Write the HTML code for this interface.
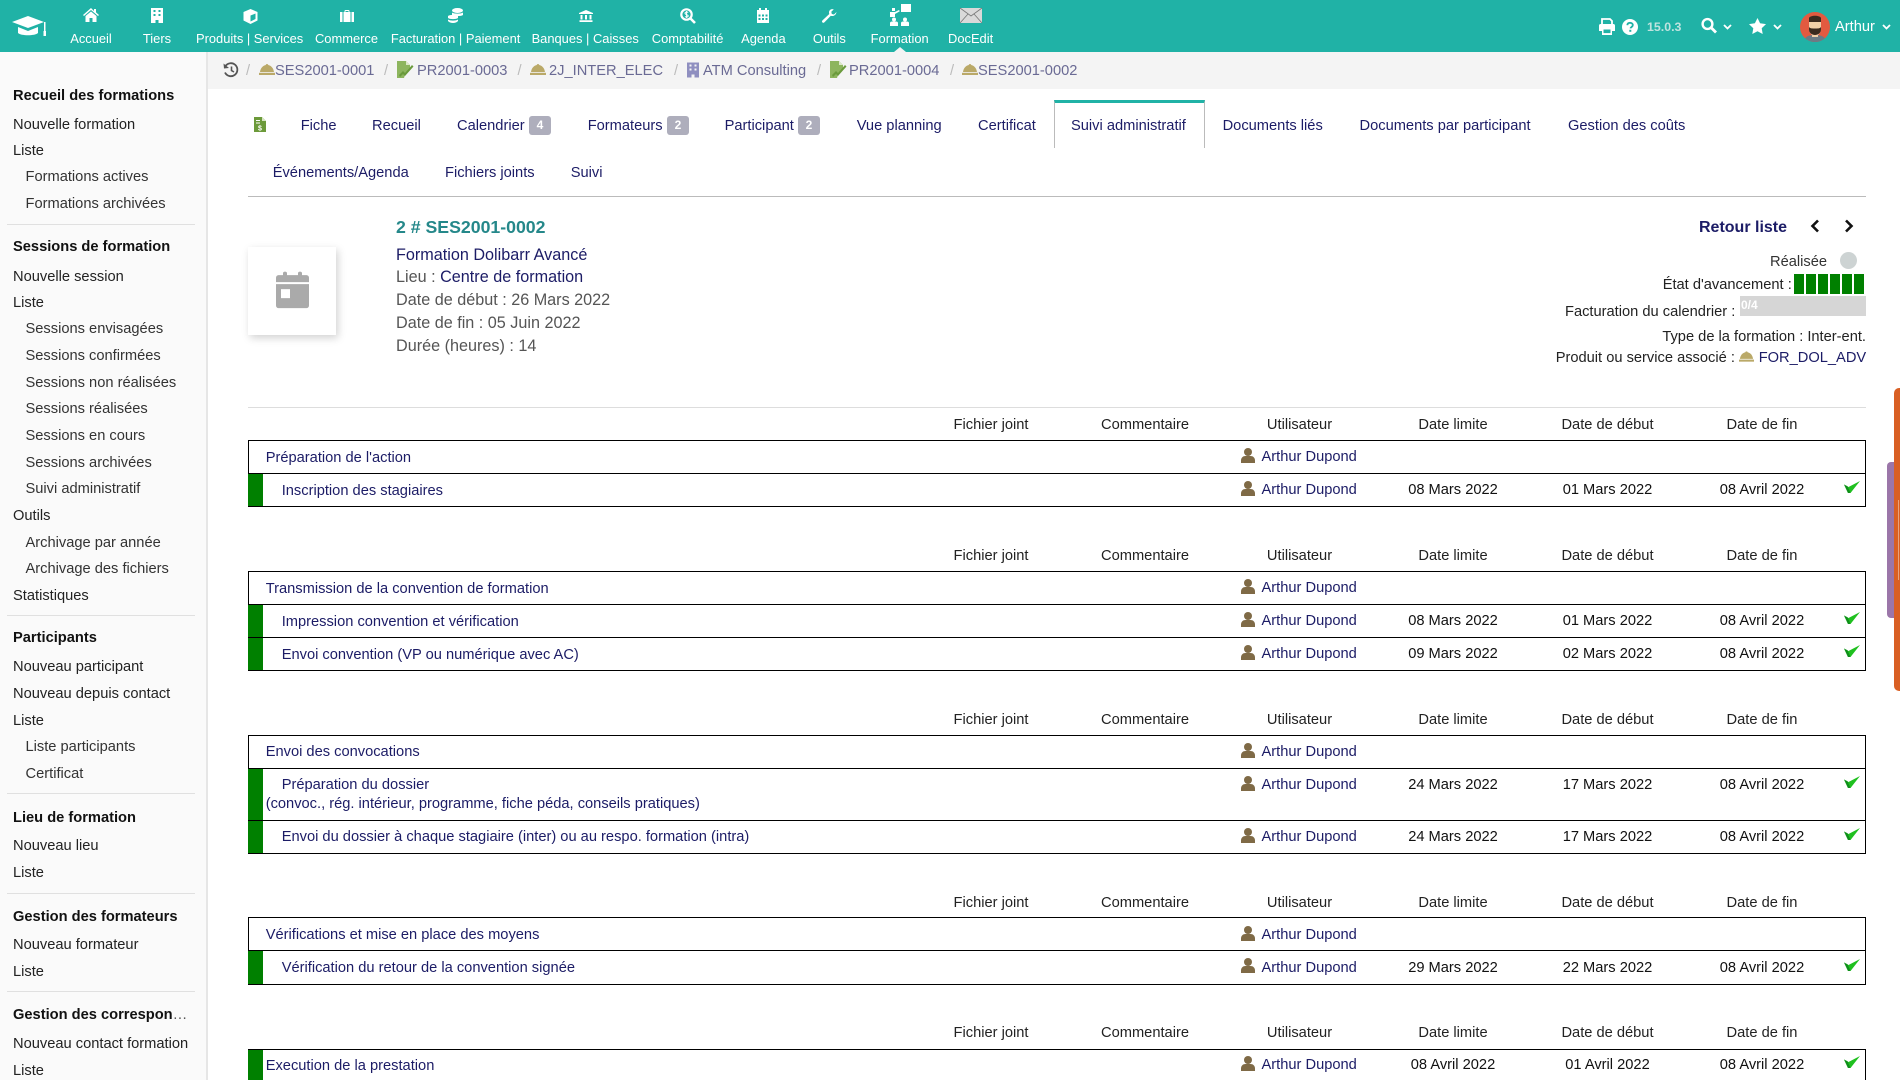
<!DOCTYPE html>
<html lang="fr"><head><meta charset="utf-8"><title>Suivi administratif</title>
<style>
*{box-sizing:border-box}
html,body{margin:0;padding:0;width:1900px;height:1080px;overflow:hidden;background:#fff;font-family:"Liberation Sans",Arial,sans-serif;font-size:14.67px;color:#222}
body{position:relative}
.t{position:absolute;line-height:20px;white-space:nowrap;margin-top:1px}
.c{transform:translateX(-50%)}
.s{left:13px;color:#222}
.i{left:25.5px;color:#333}
.h{left:13px;font-weight:700;color:#111}
.hr{position:absolute;left:7px;width:188px;height:1px;background:#e0e0e0}
.nav{color:#fff;font-size:12.9px;top:28.5px;margin-top:0}
.bc{color:#6a6a94;top:60px}
.sl{color:#bbb;top:60px}
.tab{color:#1c1c66;top:115px}
.tab2{color:#1c1c66;top:162px}
.bd{position:absolute;top:116px;width:22px;height:19px;background:#aeaebc;border-radius:3px;color:#fff;font-weight:700;font-size:12px;line-height:19px;text-align:center}
.box{position:absolute;left:248px;width:1618px;border:1px solid #000}
.ln{position:absolute;left:248px;width:1618px;height:1px;background:#000}
.g{position:absolute;left:248px;width:15px;background:#008000}
.l{color:#1c1c66}
.u{color:#1c1c66;left:1261.5px}
.d{color:#111}
svg{position:absolute;overflow:visible}
</style></head><body>
<svg width="0" height="0" style="position:absolute"><defs>
<symbol id="user" viewBox="0 0 14 15"><circle cx="7" cy="4" r="4" fill="#7f6a46"/><path d="M0 15v-2.500c0-2.800 2-4.500 4.500-4.500h5c2.500 0 4.500 1.700 4.500 4.500V15z" fill="#7f6a46"/></symbol>
<symbol id="chk" viewBox="0 0 16 12"><path d="M0 3.500L4.500 6 16 0 6.500 12H4z" fill="#1fc01f"/><path d="M0 3.500L4 12h2.500L3.500 5.300z" fill="#0f8f1a"/></symbol>
<symbol id="bell" viewBox="0 0 16 11"><path d="M8 0c.8 0 1.200.5 1.200 1C12.500 1.700 14.500 4.500 15 8H1c.5-3.500 2.500-6.300 5.800-7C6.800.5 7.200 0 8 0z" fill="#baa968"/><rect y="8.800" width="16" height="2.200" fill="#baa968"/></symbol>
<symbol id="proj" viewBox="0 0 18 18"><path d="M1 0h9l4 4v4l-5 6-1 3H1z" fill="#8db55e"/><path d="M3 14l4-4 2 2 7-8 1.500 1.500L9 15l-2-2-3 3z" fill="#6a9a3c"/><path d="M10 0v4h4z" fill="#dbe8c8"/></symbol>
</defs></svg>

<!-- top bar -->
<div style="position:absolute;left:0;top:0;width:1900px;height:52px;background:#20b2a6"></div>
<svg style="left:12px;top:15px" width="35" height="22" viewBox="0 0 35 22"><path d="M0 7L16 1l16 6-16 6z" fill="#fff"/><path d="M6 12v6c3 3 17 3 20 0v-6l-10 4z" fill="#fff"/><rect x="32" y="7" width="1.500" height="9" fill="#fff"/><rect x="31.500" y="16" width="2.500" height="5" fill="#fff"/></svg>

<svg style="left:83px;top:8px" width="16" height="14" viewBox="0 0 16 14"><path d="M8 0L0 7l1 1 7-6 7 6 1-1-3-2.600V1h-2v2z" fill="#fff"/><path d="M2.500 8L8 3.500 13.500 8v6H9.500v-4h-3v4H2.500z" fill="#fff"/></svg>
<svg style="left:151px;top:8px" width="12" height="15" viewBox="0 0 12 15"><path d="M0 0h12v15H7.500v-3h-3v3H0z" fill="#fff"/><path d="M2.500 2h2v2h-2zM7.500 2h2v2h-2zM2.500 6h2v2h-2zM7.500 6h2v2h-2z" fill="#20b2a6"/></svg>
<svg style="left:242.500px;top:9px" width="15" height="15" viewBox="0 0 15 15"><path d="M7.500 0l7 3v8.500l-7 3.500-7-3.500V3z" fill="#fff"/><path d="M7.500 6.500v6l5-2.500V4.500zM4 3l5 2.200" fill="#20b2a6"/></svg>
<svg style="left:340px;top:10px" width="14" height="12" viewBox="0 0 14 12"><path d="M4.500 2V1c0-.5.500-1 1-1h3c.5 0 1 .5 1 1v1H14v10H0V2z" fill="#fff"/><path d="M5.500 1h3v1h-3zM2.500 2h1v10h-1zM10.500 2h1v10h-1z" fill="#20b2a6"/></svg>
<svg style="left:448px;top:8px" width="15" height="15" viewBox="0 0 15 15"><ellipse cx="9.500" cy="2.500" rx="5.500" ry="2.500" fill="#fff"/><path d="M4 4.500c2 1.500 9 1.500 11 0V7c-2 1.500-9 1.500-11 0z" fill="#fff"/><path d="M0 8c2-1.500 8-1.500 10 0v2c-2 1.500-8 1.500-10 0zM0 11.500c2 1.500 8 1.500 10 0V13c-2 2.600-8 2.600-10 0z" fill="#fff"/></svg>
<svg style="left:579px;top:10px" width="14" height="12" viewBox="0 0 14 12"><path d="M7 0l7 3v1H0V3zM1.500 5h2v4.500h-2zM6 5h2v4.500H6zM10.500 5h2v4.500h-2zM.5 10.200h13V12H.5z" fill="#fff"/></svg>
<svg style="left:680px;top:8px" width="16" height="15" viewBox="0 0 16 15"><circle cx="6.500" cy="6.500" r="5.200" fill="none" stroke="#fff" stroke-width="2.200"/><path d="M10.500 10.500L15 15" stroke="#fff" stroke-width="2.600"/><path d="M8.200 4.500C7 3.600 5 4 5 5.300c0 1.600 3.200 1 3.200 2.600 0 1.200-2 1.500-3.200.6M6.600 3v7" fill="none" stroke="#fff" stroke-width="1"/></svg>
<svg style="left:757px;top:8px" width="12" height="15" viewBox="0 0 12 15"><path d="M0 2h2V0h2v2h4V0h2v2h2v13H0z" fill="#fff"/><path d="M1.500 6.500h2v2h-2zM5 6.500h2v2H5zM8.500 6.500h2v2h-2zM1.500 10h2v2h-2zM5 10h2v2H5zM8.500 10h2v2h-2z" fill="#20b2a6"/></svg>
<svg style="left:822px;top:9px" width="15" height="14" viewBox="0 0 15 14"><path d="M14.500 3L12 5.500 9.800 5 9.300 2.800 11.800.4C9.500-.5 7 1 7 3.500c0 .6.100 1 .3 1.500L.6 11.300c-.8.800-.8 1.500-.2 2.100s1.400.6 2.100-.1L8.800 6.800c2.700.9 5.200-.7 5.700-3.800z" fill="#fff"/></svg>
<svg style="left:889px;top:4px" width="22" height="22" viewBox="0 0 22 22"><rect x="12" y="0" width="10" height="8" fill="#fff"/><path d="M3 4h3v3H3zM1 8h5l4-2 .8 1.200L6 10v3H1z" fill="#fff"/><circle cx="5" cy="15.500" r="2" fill="#fff"/><path d="M1 22v-3c0-1 1-1.500 2-1.500h4c1 0 2 .5 2 1.500v3z" fill="#fff"/><circle cx="16" cy="15.500" r="2" fill="#fff"/><path d="M12 22v-3c0-1 1-1.500 2-1.500h4c1 0 2 .5 2 1.500v3z" fill="#fff"/></svg>
<svg style="left:960px;top:8px" width="22" height="15" viewBox="0 0 22 15"><rect width="22" height="15" fill="#d9d9d9"/><path d="M0 0l11 8L22 0M0 15l8-9M22 15l-8-9" fill="none" stroke="#777" stroke-width=".8"/></svg>
<div style="position:absolute;left:893.500px;top:47px;width:0;height:0;border-left:6px solid transparent;border-right:6px solid transparent;border-bottom:5px solid #f4f4f4"></div>

<span class="t c nav" style="left:91px">Accueil</span>
<span class="t c nav" style="left:157px">Tiers</span>
<span class="t c nav" style="left:249.600px">Produits | Services</span>
<span class="t c nav" style="left:346.500px">Commerce</span>
<span class="t c nav" style="left:455.600px">Facturation | Paiement</span>
<span class="t c nav" style="left:585.200px">Banques | Caisses</span>
<span class="t c nav" style="left:687.600px">Comptabilité</span>
<span class="t c nav" style="left:763.400px">Agenda</span>
<span class="t c nav" style="left:829.400px">Outils</span>
<span class="t c nav" style="left:899.700px">Formation</span>
<span class="t c nav" style="left:970.600px">DocEdit</span>

<svg style="left:1599px;top:19px" width="16" height="16" viewBox="0 0 16 16"><path d="M3 0h8l2 2v4H3z" fill="none" stroke="#fff" stroke-width="1.800"/><path d="M0 6.500c0-1 .8-1.500 1.500-1.500h13c.7 0 1.500.5 1.500 1.500V12h-3v4H3v-4H0z" fill="#fff"/><rect x="4.500" y="10.500" width="7" height="3.600" fill="#20b2a6"/></svg>
<svg style="left:1622px;top:19px" width="16" height="16" viewBox="0 0 16 16"><circle cx="8" cy="8" r="8" fill="#fff"/><path d="M5.300 6.200C5.500 4.600 6.600 3.800 8 3.800c1.600 0 2.800 1 2.800 2.300 0 1.800-2.200 1.900-2.200 3.300" fill="none" stroke="#20b2a6" stroke-width="1.800"/><rect x="7.300" y="10.800" width="2" height="2" fill="#20b2a6"/></svg>
<span class="t" style="left:1647px;top:16px;font-size:12.4px;font-weight:700;color:#bfe3df">15.0.3</span>
<svg style="left:1701px;top:18px" width="16" height="15" viewBox="0 0 16 15"><circle cx="6.500" cy="6" r="4.900" fill="none" stroke="#fff" stroke-width="2.400"/><path d="M10 9.500l5 5" stroke="#fff" stroke-width="2.800"/></svg>
<svg style="left:1723px;top:24px" width="9" height="6" viewBox="0 0 9 6"><path d="M1 1l3.500 3.500L8 1" fill="none" stroke="#fff" stroke-width="1.800"/></svg>
<svg style="left:1749px;top:18px" width="17" height="16" viewBox="0 0 17 16"><path d="M8.500 0l2.600 5.300 5.900.8-4.300 4.100 1 5.800-5.200-2.800L3.300 16l1-5.800L0 6.100l5.900-.8z" fill="#fff"/></svg>
<svg style="left:1773px;top:24px" width="9" height="6" viewBox="0 0 9 6"><path d="M1 1l3.500 3.500L8 1" fill="none" stroke="#fff" stroke-width="1.800"/></svg>
<svg style="left:1800px;top:12px" width="30" height="30" viewBox="0 0 30 30"><defs><clipPath id="av"><circle cx="15" cy="15" r="15"/></clipPath></defs><g clip-path="url(#av)"><rect width="30" height="30" fill="#e25a40"/><path d="M4 30c0-5 4-7 11-7s11 2 11 7z" fill="#6b7a85"/><rect x="12" y="19" width="6" height="6" fill="#f0cfa8"/><path d="M9 9h12v8c0 4-3 7-6 7s-6-3-6-7z" fill="#f0cfa8"/><path d="M9 6c1-3 11-3 12 0v4H9z" fill="#3a2a1f"/><path d="M9 15c1 1.500 3 1.500 6 1.500s5 0 6-1.500v2.500c0 3.500-3 5.500-6 5.500s-6-2-6-5.500z" fill="#3a2a1f"/></g></svg>
<span class="t" style="left:1835px;top:16px;color:#fff">Arthur</span>
<svg style="left:1882px;top:24px" width="9" height="6" viewBox="0 0 9 6"><path d="M1 1l3.500 3.500L8 1" fill="none" stroke="#fff" stroke-width="1.800"/></svg>

<!-- sidebar -->
<div style="position:absolute;left:0;top:52px;width:208px;height:1028px;background:#fafafa;border-right:2px solid #e6e6e6"></div>
<span class="t h" style="top:84.500px">Recueil des formations</span>
<span class="t s" style="top:113.600px">Nouvelle formation</span>
<span class="t s" style="top:140.300px">Liste</span>
<span class="t i" style="top:166.300px">Formations actives</span>
<span class="t i" style="top:193px">Formations archivées</span>
<div class="hr" style="top:224px"></div>
<span class="t h" style="top:236px">Sessions de formation</span>
<span class="t s" style="top:265.700px">Nouvelle session</span>
<span class="t s" style="top:291.700px">Liste</span>
<span class="t i" style="top:318.400px">Sessions envisagées</span>
<span class="t i" style="top:345px">Sessions confirmées</span>
<span class="t i" style="top:371.700px">Sessions non réalisées</span>
<span class="t i" style="top:398.300px">Sessions réalisées</span>
<span class="t i" style="top:425px">Sessions en cours</span>
<span class="t i" style="top:451.700px">Sessions archivées</span>
<span class="t i" style="top:477.700px">Suivi administratif</span>
<span class="t s" style="top:505px">Outils</span>
<span class="t i" style="top:531.600px">Archivage par année</span>
<span class="t i" style="top:557.700px">Archivage des fichiers</span>
<span class="t s" style="top:585px">Statistiques</span>
<div class="hr" style="top:615px"></div>
<span class="t h" style="top:627.400px">Participants</span>
<span class="t s" style="top:656.400px">Nouveau participant</span>
<span class="t s" style="top:683px">Nouveau depuis contact</span>
<span class="t s" style="top:709.800px">Liste</span>
<span class="t i" style="top:736.400px">Liste participants</span>
<span class="t i" style="top:762.500px">Certificat</span>
<div class="hr" style="top:793px"></div>
<span class="t h" style="top:806.700px">Lieu de formation</span>
<span class="t s" style="top:835.200px">Nouveau lieu</span>
<span class="t s" style="top:861.800px">Liste</span>
<div class="hr" style="top:893px"></div>
<span class="t h" style="top:906px">Gestion des formateurs</span>
<span class="t s" style="top:934px">Nouveau formateur</span>
<span class="t s" style="top:960.600px">Liste</span>
<div class="hr" style="top:991px"></div>
<span class="t h" style="top:1003.600px">Gestion des correspon<span style="font-weight:400;color:#555">…</span></span>
<span class="t s" style="top:1032.700px">Nouveau contact formation</span>
<span class="t s" style="top:1060px">Liste</span>

<!-- breadcrumb -->
<div style="position:absolute;left:208px;top:52px;width:1692px;height:37px;background:#f4f4f4"></div>
<svg style="left:223px;top:62px" width="16" height="16" viewBox="0 0 16 16"><path d="M2.500 4A6.500 6.500 0 1 1 2 10.500" fill="none" stroke="#555" stroke-width="1.800"/><path d="M.5 1.500L1 6.500l5-.5z" fill="#555"/><path d="M8.500 4.500V8.500l2.500 1.500" fill="none" stroke="#555" stroke-width="1.600"/></svg>
<span class="t sl" style="left:246px">/</span>
<svg style="left:259px;top:64px" width="16" height="11"><use href="#bell"/></svg>
<span class="t bc" style="left:275px">SES2001-0001</span>
<span class="t sl" style="left:384px">/</span>
<svg style="left:396px;top:61px" width="18" height="18"><use href="#proj"/></svg>
<span class="t bc" style="left:417px">PR2001-0003</span>
<span class="t sl" style="left:517.500px">/</span>
<svg style="left:530px;top:64px" width="16" height="11"><use href="#bell"/></svg>
<span class="t bc" style="left:549px">2J_INTER_ELEC</span>
<span class="t sl" style="left:674px">/</span>
<svg style="left:687px;top:62px" width="12" height="16" viewBox="0 0 12 15"><path d="M0 0h12v15H7.500v-3h-3v3H0z" fill="#8f8fc0"/><path d="M2.500 2h2v2h-2zM7.500 2h2v2h-2zM2.500 6h2v2h-2zM7.500 6h2v2h-2z" fill="#f4f4f4"/></svg>
<span class="t bc" style="left:703px">ATM Consulting</span>
<span class="t sl" style="left:817px">/</span>
<svg style="left:829px;top:61px" width="18" height="18"><use href="#proj"/></svg>
<span class="t bc" style="left:849px">PR2001-0004</span>
<span class="t sl" style="left:950px">/</span>
<svg style="left:962px;top:64px" width="16" height="11"><use href="#bell"/></svg>
<span class="t bc" style="left:978px">SES2001-0002</span>

<!-- tabs -->
<svg style="left:254px;top:117px" width="12" height="15" viewBox="0 0 12 15"><path d="M0 0h8l4 4v11H0z" fill="#6c9a3a"/><path d="M8 0v4h4z" fill="#d7e5c3"/><path d="M2 3h4v1H2zM2 5.500h4v1H2z" fill="#fff"/><text x="6" y="13.500" font-size="7" font-weight="700" fill="#fff" text-anchor="middle" font-family="Liberation Sans">$</text></svg>
<span class="t tab" style="left:300.700px">Fiche</span>
<span class="t tab" style="left:372px">Recueil</span>
<span class="t tab" style="left:457px">Calendrier</span><span class="bd" style="left:529px">4</span>
<span class="t tab" style="left:587.700px">Formateurs</span><span class="bd" style="left:667px">2</span>
<span class="t tab" style="left:724.600px">Participant</span><span class="bd" style="left:798px">2</span>
<span class="t tab" style="left:856.700px">Vue planning</span>
<span class="t tab" style="left:978px">Certificat</span>
<div style="position:absolute;left:1054px;top:100px;width:151px;height:48px;background:#fff;border:1px solid #bbb;border-top:3px solid #20b2a6;border-bottom:0"></div>
<span class="t tab" style="left:1071px">Suivi administratif</span>
<span class="t tab" style="left:1222.600px">Documents liés</span>
<span class="t tab" style="left:1359.500px">Documents par participant</span>
<span class="t tab" style="left:1568px">Gestion des coûts</span>
<span class="t tab2" style="left:272.700px">Événements/Agenda</span>
<span class="t tab2" style="left:445px">Fichiers joints</span>
<span class="t tab2" style="left:570.700px">Suivi</span>
<div style="position:absolute;left:248px;top:196px;width:1618px;height:1px;background:#bbb"></div>

<!-- banner -->
<div style="position:absolute;left:248px;top:247px;width:88px;height:88px;background:#fff;box-shadow:2px 3px 8px rgba(0,0,0,.18)"></div>
<svg style="left:275.700px;top:270.700px" width="33" height="37.300" viewBox="0 0 33 37"><path d="M3 4h4V2c0-2 4-2 4 0v2h11V2c0-2 4-2 4 0v2h4c2 0 3 1 3 3v4H0V7c0-2 1-3 3-3zM0 13h33v21c0 2-1 3-3 3H3c-2 0-3-1-3-3z" fill="#aaa"/><rect x="5" y="18" width="9" height="9" fill="#fff"/></svg>
<span class="t" style="left:396px;top:215.500px;font-size:17.7px;font-weight:700;color:#25888a">2 # SES2001-0002</span>
<span class="t" style="left:396px;top:243.800px;font-size:16.2px;color:#1c1c66">Formation Dolibarr Avancé</span>
<span class="t" style="left:396px;top:265.800px;font-size:16.2px;color:#555">Lieu : <span style="color:#1c1c66">Centre de formation</span></span>
<span class="t" style="left:396px;top:288.800px;font-size:16.2px;color:#555">Date de début : 26 Mars 2022</span>
<span class="t" style="left:396px;top:311.800px;font-size:16.2px;color:#555">Date de fin : 05 Juin 2022</span>
<span class="t" style="left:396px;top:334.500px;font-size:16.2px;color:#555">Durée (heures) : 14</span>

<span class="t" style="left:1699px;top:216.500px;font-size:16px;font-weight:700;color:#1c1c66">Retour liste</span>
<svg style="left:1810px;top:219px" width="10" height="14" viewBox="0 0 10 14"><path d="M8 1.500L2.500 7 8 12.500" fill="none" stroke="#111" stroke-width="2.600"/></svg>
<svg style="left:1844px;top:219px" width="10" height="14" viewBox="0 0 10 14"><path d="M2 1.500L7.500 7 2 12.500" fill="none" stroke="#111" stroke-width="2.600"/></svg>
<span class="t" style="left:1770px;top:250.700px;color:#333">Réalisée</span>
<div style="position:absolute;left:1839.500px;top:251.500px;width:17px;height:17px;border-radius:50%;background:#cdd3d3"></div>
<span class="t" style="left:1662.700px;top:274px;color:#222">État d'avancement :</span>
<div style="position:absolute;left:1794px;top:274px;width:10px;height:20px;background:#008000"></div>
<div style="position:absolute;left:1806px;top:274px;width:10px;height:20px;background:#008000"></div>
<div style="position:absolute;left:1818px;top:274px;width:10px;height:20px;background:#008000"></div>
<div style="position:absolute;left:1830px;top:274px;width:10px;height:20px;background:#008000"></div>
<div style="position:absolute;left:1842px;top:274px;width:10px;height:20px;background:#008000"></div>
<div style="position:absolute;left:1854px;top:274px;width:10px;height:20px;background:#008000"></div>
<span class="t" style="left:1565px;top:300.700px;color:#222">Facturation du calendrier :</span>
<div style="position:absolute;left:1740px;top:296px;width:126px;height:20px;background:#d6d6d6"></div>
<span class="t" style="left:1741px;top:294px;font-size:12px;font-weight:700;color:#fff">0/4</span>
<span class="t" style="right:34px;top:326px;color:#222">Type de la formation : Inter-ent.</span>
<span class="t" style="left:1555.700px;top:346.700px;color:#222">Produit ou service associé :</span>
<span class="t l" style="left:1758.700px;top:346.700px">FOR_DOL_ADV</span>
<svg style="left:1739px;top:351px" width="15" height="11"><use href="#bell"/></svg>
<div style="position:absolute;left:248px;top:407px;width:1618px;height:1px;background:#ddd"></div>

<!-- T1 -->
<span class="t c" style="left:991px;top:414px">Fichier joint</span><span class="t c" style="left:1145px;top:414px">Commentaire</span><span class="t c" style="left:1299.500px;top:414px">Utilisateur</span><span class="t c" style="left:1453px;top:414px">Date limite</span><span class="t c" style="left:1607.500px;top:414px">Date de début</span><span class="t c" style="left:1762px;top:414px">Date de fin</span>
<div class="box" style="top:440px;height:67px"></div><div class="ln" style="top:473px"></div><div class="g" style="top:474px;height:32px"></div>
<span class="t l" style="left:265.700px;top:446.500px">Préparation de l'action</span>
<svg style="left:1241px;top:448px" width="14" height="15"><use href="#user"/></svg><span class="t u" style="top:446px">Arthur Dupond</span>
<span class="t l" style="left:281.700px;top:480px">Inscription des stagiaires</span>
<svg style="left:1241px;top:481px" width="14" height="15"><use href="#user"/></svg><span class="t u" style="top:479px">Arthur Dupond</span>
<span class="t c d" style="left:1453px;top:479px">08 Mars 2022</span><span class="t c d" style="left:1607.500px;top:479px">01 Mars 2022</span><span class="t c d" style="left:1762px;top:479px">08 Avril 2022</span>
<svg style="left:1844px;top:481px" width="16" height="12"><use href="#chk"/></svg>

<!-- T2 -->
<span class="t c" style="left:991px;top:545px">Fichier joint</span><span class="t c" style="left:1145px;top:545px">Commentaire</span><span class="t c" style="left:1299.500px;top:545px">Utilisateur</span><span class="t c" style="left:1453px;top:545px">Date limite</span><span class="t c" style="left:1607.500px;top:545px">Date de début</span><span class="t c" style="left:1762px;top:545px">Date de fin</span>
<div class="box" style="top:571px;height:100px"></div><div class="ln" style="top:604px"></div><div class="ln" style="top:637px"></div><div class="g" style="top:605px;height:32px"></div><div class="g" style="top:638px;height:32px"></div>
<span class="t l" style="left:265.700px;top:577.500px">Transmission de la convention de formation</span>
<svg style="left:1241px;top:578.500px" width="14" height="15"><use href="#user"/></svg><span class="t u" style="top:576.500px">Arthur Dupond</span>
<span class="t l" style="left:281.700px;top:610.500px">Impression convention et vérification</span>
<svg style="left:1241px;top:611.500px" width="14" height="15"><use href="#user"/></svg><span class="t u" style="top:609.500px">Arthur Dupond</span>
<span class="t c d" style="left:1453px;top:609.500px">08 Mars 2022</span><span class="t c d" style="left:1607.500px;top:609.500px">01 Mars 2022</span><span class="t c d" style="left:1762px;top:609.500px">08 Avril 2022</span>
<svg style="left:1844px;top:612px" width="16" height="12"><use href="#chk"/></svg>
<span class="t l" style="left:281.700px;top:643.500px">Envoi convention (VP ou numérique avec AC)</span>
<svg style="left:1241px;top:644.500px" width="14" height="15"><use href="#user"/></svg><span class="t u" style="top:642.500px">Arthur Dupond</span>
<span class="t c d" style="left:1453px;top:642.500px">09 Mars 2022</span><span class="t c d" style="left:1607.500px;top:642.500px">02 Mars 2022</span><span class="t c d" style="left:1762px;top:642.500px">08 Avril 2022</span>
<svg style="left:1844px;top:645px" width="16" height="12"><use href="#chk"/></svg>

<!-- T3 -->
<span class="t c" style="left:991px;top:708.500px">Fichier joint</span><span class="t c" style="left:1145px;top:708.500px">Commentaire</span><span class="t c" style="left:1299.500px;top:708.500px">Utilisateur</span><span class="t c" style="left:1453px;top:708.500px">Date limite</span><span class="t c" style="left:1607.500px;top:708.500px">Date de début</span><span class="t c" style="left:1762px;top:708.500px">Date de fin</span>
<div class="box" style="top:735px;height:119px"></div><div class="ln" style="top:768px"></div><div class="ln" style="top:820px"></div><div class="g" style="top:769px;height:51px"></div><div class="g" style="top:821px;height:32px"></div>
<span class="t l" style="left:265.700px;top:741px">Envoi des convocations</span>
<svg style="left:1241px;top:743px" width="14" height="15"><use href="#user"/></svg><span class="t u" style="top:741px">Arthur Dupond</span>
<span class="t l" style="left:281.700px;top:774px">Préparation du dossier</span>
<span class="t l" style="left:265.700px;top:793.300px">(convoc., rég. intérieur, programme, fiche péda, conseils pratiques)</span>
<svg style="left:1241px;top:775.500px" width="14" height="15"><use href="#user"/></svg><span class="t u" style="top:773.500px">Arthur Dupond</span>
<span class="t c d" style="left:1453px;top:773.500px">24 Mars 2022</span><span class="t c d" style="left:1607.500px;top:773.500px">17 Mars 2022</span><span class="t c d" style="left:1762px;top:773.500px">08 Avril 2022</span>
<svg style="left:1844px;top:775.500px" width="16" height="12"><use href="#chk"/></svg>
<span class="t l" style="left:281.700px;top:826px">Envoi du dossier à chaque stagiaire (inter) ou au respo. formation (intra)</span>
<svg style="left:1241px;top:827.500px" width="14" height="15"><use href="#user"/></svg><span class="t u" style="top:825.500px">Arthur Dupond</span>
<span class="t c d" style="left:1453px;top:825.500px">24 Mars 2022</span><span class="t c d" style="left:1607.500px;top:825.500px">17 Mars 2022</span><span class="t c d" style="left:1762px;top:825.500px">08 Avril 2022</span>
<svg style="left:1844px;top:827.500px" width="16" height="12"><use href="#chk"/></svg>

<!-- T4 -->
<span class="t c" style="left:991px;top:891.500px">Fichier joint</span><span class="t c" style="left:1145px;top:891.500px">Commentaire</span><span class="t c" style="left:1299.500px;top:891.500px">Utilisateur</span><span class="t c" style="left:1453px;top:891.500px">Date limite</span><span class="t c" style="left:1607.500px;top:891.500px">Date de début</span><span class="t c" style="left:1762px;top:891.500px">Date de fin</span>
<div class="box" style="top:917px;height:68px"></div><div class="ln" style="top:950px"></div><div class="g" style="top:951px;height:33px"></div>
<span class="t l" style="left:265.700px;top:924px">Vérifications et mise en place des moyens</span>
<svg style="left:1241px;top:926px" width="14" height="15"><use href="#user"/></svg><span class="t u" style="top:924px">Arthur Dupond</span>
<span class="t l" style="left:281.700px;top:957px">Vérification du retour de la convention signée</span>
<svg style="left:1241px;top:958px" width="14" height="15"><use href="#user"/></svg><span class="t u" style="top:956.500px">Arthur Dupond</span>
<span class="t c d" style="left:1453px;top:956.500px">29 Mars 2022</span><span class="t c d" style="left:1607.500px;top:956.500px">22 Mars 2022</span><span class="t c d" style="left:1762px;top:956.500px">08 Avril 2022</span>
<svg style="left:1844px;top:958.500px" width="16" height="12"><use href="#chk"/></svg>

<!-- T5 -->
<span class="t c" style="left:991px;top:1022px">Fichier joint</span><span class="t c" style="left:1145px;top:1022px">Commentaire</span><span class="t c" style="left:1299.500px;top:1022px">Utilisateur</span><span class="t c" style="left:1453px;top:1022px">Date limite</span><span class="t c" style="left:1607.500px;top:1022px">Date de début</span><span class="t c" style="left:1762px;top:1022px">Date de fin</span>
<div class="box" style="top:1049px;height:31px;border-bottom:0"></div><div class="g" style="top:1050px;height:30px"></div>
<span class="t l" style="left:265.700px;top:1055px">Execution de la prestation</span>
<svg style="left:1241px;top:1056px" width="14" height="15"><use href="#user"/></svg><span class="t u" style="top:1054px">Arthur Dupond</span>
<span class="t c d" style="left:1453px;top:1054px">08 Avril 2022</span><span class="t c d" style="left:1607.500px;top:1054px">01 Avril 2022</span><span class="t c d" style="left:1762px;top:1054px">08 Avril 2022</span>
<svg style="left:1844px;top:1056px" width="16" height="12"><use href="#chk"/></svg>

<!-- side tabs -->
<div style="position:absolute;left:1887px;top:462px;width:8px;height:156px;background:#9b76a9;border-radius:4px 0 0 4px"></div>
<div style="position:absolute;left:1894px;top:388px;width:6px;height:303px;background:#d95f23;border-radius:5px 0 0 5px"></div>
<div style="position:absolute;left:1898px;top:500px;width:1px;height:80px;background:#e9a27d"></div>
</body></html>
